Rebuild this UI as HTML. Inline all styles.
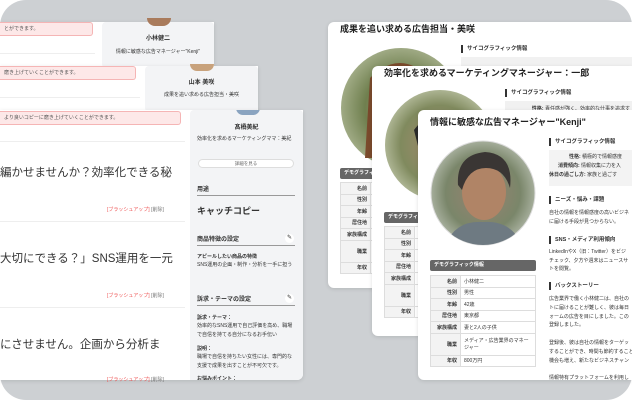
<!DOCTYPE html>
<html><head><meta charset="utf-8">
<style>
*{margin:0;padding:0;box-sizing:border-box}
body{width:632px;height:400px;overflow:hidden;background:#fff;font-family:"Liberation Sans","Noto Sans CJK JP",sans-serif;color:#333;position:relative}
.bg{position:absolute;left:0;top:0;width:632px;height:400px;background:#cdd0d3;border-radius:26px}
.a{position:absolute}
.card{position:absolute;background:#fff;box-shadow:0 1px 4px rgba(0,0,0,.12)}
.pink{position:absolute;left:0;height:14px;background:#fde8e8;border:1px solid #f5b5b5;border-left:none;border-radius:0 3px 3px 0;font-size:5px;line-height:12px;padding-left:4px;color:#555}
.side{position:absolute;background:#f3f4f6;border-radius:4px}
.t5{font-size:5px;line-height:9px}
.b{font-weight:bold}
.big{font-size:11.5px;color:#333;white-space:nowrap}
.tags{font-size:5px;color:#e55}
.sep{position:absolute;height:1px;background:#eee}
.h{font-size:6px;font-weight:bold;border-bottom:1px solid #999;padding-bottom:2px}
.sec{font-size:5.5px;font-weight:bold;border-left:2px solid #333;padding-left:4px;line-height:8px;white-space:nowrap}
.title{font-size:9px;font-weight:bold;white-space:nowrap;color:#222}
.dh{background:#666;color:#fff;font-size:5px;font-weight:bold;height:11px;line-height:11px;padding-left:4px;border-radius:2px}
table{border-collapse:collapse;font-size:5px}
td{border:1px solid #ddd;height:11.5px;padding:0 3px}
td.l{background:#f3f3f3;text-align:right;font-weight:bold;width:30px}
.pen{position:absolute;width:9px;height:9px;border-radius:50%;background:#fff;font-size:6px;line-height:9px;text-align:center}
</style></head><body>
<div class="bg"></div>

<!-- left stack -->
<div class="card" style="left:0;top:22px;width:214px;height:200px"></div>
<div class="pink" style="top:22px;width:93px">とができます。</div>
<div class="side" style="left:102px;top:22px;width:112px;height:46px"></div>
<div class="a" style="left:147px;top:18px;width:24px;height:8px;border-radius:0 0 12px 12px;background:#a97b5c"></div>
<div class="a b" style="left:102px;top:33px;width:112px;text-align:center;font-size:6px">小林健二</div>
<div class="a t5" style="left:102px;top:48px;width:112px;text-align:center">情報に敏感な広告マネージャー"Kenji"</div>
<div class="sep" style="left:0;top:53px;width:95px"></div>

<div class="card" style="left:0;top:66px;width:258px;height:200px"></div>
<div class="pink" style="top:66px;width:136px">磨き上げていくことができます。</div>
<div class="side" style="left:145px;top:66px;width:113px;height:46px"></div>
<div class="a" style="left:190px;top:64px;width:24px;height:7px;border-radius:0 0 12px 12px;background:#c8a27c"></div>
<div class="a b" style="left:145px;top:77px;width:113px;text-align:center;font-size:6px">山本 美咲</div>
<div class="a t5" style="left:145px;top:91px;width:113px;text-align:center">成果を追い求める広告担当・美咲</div>
<div class="sep" style="left:0;top:97px;width:140px"></div>

<div class="card" style="left:0;top:110px;width:303px;height:270px;border-radius:0 0 6px 0"></div>
<div class="pink" style="top:111px;width:181px">より良いコピーに磨き上げていくことができます。</div>
<div class="sep" style="left:0;top:141px;width:185px"></div>
<div class="a big" style="left:0;top:164px;width:185px;overflow:hidden">編かせませんか？効率化できる秘</div>
<div class="a tags" style="left:107px;top:206px">[ブラッシュアップ] <span style="color:#777">[削除]</span></div>
<div class="sep" style="left:0;top:221px;width:185px"></div>
<div class="a big" style="left:0;top:250px;width:185px;overflow:hidden">大切にできる？」SNS運用を一元</div>
<div class="a tags" style="left:107px;top:292px">[ブラッシュアップ] <span style="color:#777">[削除]</span></div>
<div class="sep" style="left:0;top:307px;width:185px"></div>
<div class="a big" style="left:0;top:336px;width:185px;overflow:hidden">にさせません。企画から分析ま</div>
<div class="a tags" style="left:107px;top:376px">[ブラッシュアップ] <span style="color:#777">[削除]</span></div>

<div class="side" style="left:190px;top:110px;width:113px;height:270px;border-radius:4px 4px 6px 0;overflow:hidden">
 <div class="a" style="left:46px;top:-2px;width:24px;height:7px;border-radius:0 0 12px 12px;background:#8aa4c0"></div>
 <div class="a b" style="left:0;top:12px;width:113px;text-align:center;font-size:6px">髙橋美紀</div>
 <div class="a t5" style="left:7px;top:25px;width:100px">効率化を求めるマーケティングママ：美紀</div>
 <div class="a" style="left:8px;top:49px;width:96px;height:9px;background:#fff;border:1px solid #ddd;border-radius:5px;font-size:4.5px;line-height:7px;text-align:center;color:#666">詳細を見る</div>
 <div class="a h" style="left:7px;top:74px;width:98px">用途</div>
 <div class="a b" style="left:7px;top:94px;font-size:9px">キャッチコピー</div>
 <div class="a h" style="left:7px;top:124px;width:98px">商品特徴の設定</div>
 <div class="pen" style="left:95px;top:124px">✎</div>
 <div class="a t5 b" style="left:7px;top:143px">アピールしたい商品の特徴</div>
 <div class="a t5" style="left:7px;top:151px;width:98px;line-height:9px">SNS運用の企画・制作・分析を一手に担う</div>
 <div class="a h" style="left:7px;top:184px;width:98px">訴求・テーマの設定</div>
 <div class="pen" style="left:95px;top:184px">✎</div>
 <div class="a t5 b" style="left:7px;top:204px">訴求・テーマ：</div>
 <div class="a t5" style="left:7px;top:212px;width:98px">効率的なSNS運用で自己評価を高め、職場で自信を持てる自分になるお手伝い</div>
 <div class="a t5 b" style="left:7px;top:235px">説明：</div>
 <div class="a t5" style="left:7px;top:243px;width:98px">職場で自信を持ちたい女性には、専門的な支援で成果を出すことが不可欠です。</div>
 <div class="a t5 b" style="left:7px;top:265px">お悩みポイント：</div>
</div>

<!-- right stack A -->
<div class="card" style="left:328px;top:22px;width:304px;height:266px;border-radius:6px 0 0 6px"></div>
<div class="a title" style="left:340px;top:22px">成果を追い求める広告担当・美咲</div>
<svg class="a" style="left:340px;top:48px" width="122" height="120"><defs><radialGradient id="ga" cx=".5" cy=".5" r=".6"><stop offset="0" stop-color="#b89a7e"/><stop offset=".5" stop-color="#6f7f4e"/><stop offset="1" stop-color="#b8c0a0"/></radialGradient></defs><circle cx="61" cy="60" r="60" fill="url(#ga)"/><path d="M30 30 Q60 0 90 30 L95 110 L25 110Z" fill="#7a4a2c"/></svg>
<div class="a sec" style="left:461px;top:45px">サイコグラフィック情報</div>
<div class="a" style="left:461px;top:57px;width:171px;height:9px;background:#f1f1f1"></div>
<div class="a dh" style="left:340px;top:168px;width:96px">デモグラフィック情報</div>
<table class="a" style="left:340px;top:182px;width:96px"><tr><td class="l">名前</td><td></td></tr><tr><td class="l">性別</td><td></td></tr><tr><td class="l">年齢</td><td></td></tr><tr><td class="l">居住地</td><td></td></tr><tr><td class="l">家族構成</td><td></td></tr><tr><td class="l" style="height:22px">職業</td><td></td></tr><tr><td class="l">年収</td><td></td></tr></table>

<!-- B -->
<div class="card" style="left:372px;top:66px;width:260px;height:270px;border-radius:6px 0 0 6px"></div>
<div class="a title" style="left:384px;top:66px">効率化を求めるマーケティングマネージャー：一郎</div>
<svg class="a" style="left:384px;top:90px" width="112" height="110"><defs><radialGradient id="gb" cx=".5" cy=".5" r=".6"><stop offset="0" stop-color="#a88a70"/><stop offset=".6" stop-color="#808a5e"/><stop offset="1" stop-color="#ccd2b8"/></radialGradient></defs><circle cx="56" cy="55" r="55" fill="url(#gb)"/><path d="M30 40 Q56 5 85 40 L80 60 L35 60Z" fill="#2a2a2a"/></svg>
<div class="a sec" style="left:505px;top:89px">サイコグラフィック情報</div>
<div class="a" style="left:505px;top:101px;width:127px;height:16px;background:#f1f1f1;font-size:5px;line-height:16px;text-align:right;padding-right:2px;white-space:nowrap;overflow:hidden"><b>性格:</b> 責任感が強く、効率的な仕事を追求す</div>
<div class="a dh" style="left:384px;top:212px;width:100px">デモグラフィック情報</div>
<table class="a" style="left:384px;top:226px;width:100px"><tr><td class="l">名前</td><td></td></tr><tr><td class="l">性別</td><td></td></tr><tr><td class="l">年齢</td><td></td></tr><tr><td class="l">居住地</td><td></td></tr><tr><td class="l">家族構成</td><td></td></tr><tr><td class="l" style="height:22px">職業</td><td></td></tr><tr><td class="l">年収</td><td></td></tr></table>

<!-- C -->
<div class="card" style="left:418px;top:110px;width:214px;height:270px;border-radius:6px 0 0 6px;overflow:hidden">
 <div class="a title" style="left:12px;top:5px">情報に敏感な広告マネージャー"Kenji"</div>
 <svg class="a" style="left:12px;top:30px" width="106" height="106"><defs><radialGradient id="gc" cx=".5" cy=".5" r=".6"><stop offset="0" stop-color="#9a8270"/><stop offset=".6" stop-color="#7a866a"/><stop offset="1" stop-color="#c4cabe"/></radialGradient><clipPath id="cc"><circle cx="53" cy="53" r="52"/></clipPath></defs><circle cx="53" cy="53" r="52" fill="url(#gc)" stroke="#ddd"/><g clip-path="url(#cc)"><path d="M15 106 Q25 80 53 82 Q82 80 92 106Z" fill="#6e7a82"/><ellipse cx="54" cy="52" rx="22" ry="28" fill="#b08466"/><path d="M28 45 Q26 15 55 12 Q84 14 80 48 Q74 28 56 28 Q38 28 32 50Z" fill="#3a3634"/></g></svg>
 <div class="a dh" style="left:12px;top:150px;width:106px">デモグラフィック情報</div>
 <table class="a" style="left:12px;top:165px;width:106px"><tr><td class="l">名前</td><td>小林健二</td></tr><tr><td class="l">性別</td><td>男性</td></tr><tr><td class="l">年齢</td><td>42歳</td></tr><tr><td class="l">居住地</td><td>東京都</td></tr><tr><td class="l">家族構成</td><td>妻と2人の子供</td></tr><tr><td class="l" style="height:22px">職業</td><td>メディア・広告業界のマネージャー</td></tr><tr><td class="l">年収</td><td>800万円</td></tr></table>
 <div class="a sec" style="left:131px;top:28px">サイコグラフィック情報</div>
 <div class="a t5" style="left:131px;top:40px;width:90px;height:36px;background:#f3f3f3;padding-top:3px;white-space:nowrap"><div style="padding-left:20px"><b>性格:</b> 積極的で情報感度</div><div style="padding-left:9px"><b>消費傾向:</b> 情報収集に力を入</div><div><b>休日の過ごし方:</b> 家族と過ごす</div></div>
 <div class="a sec" style="left:131px;top:86px">ニーズ・悩み・課題</div>
 <div class="a t5" style="left:131px;top:99px;width:90px;white-space:nowrap;line-height:8.5px">自社の情報を情報感度の高いビジネ<br>に届ける手段が見つからない。</div>
 <div class="a sec" style="left:131px;top:126px">SNS・メディア利用傾向</div>
 <div class="a t5" style="left:131px;top:138px;white-space:nowrap;line-height:8.5px">LinkedInやX（旧：Twitter）をビジ<br>チェック、夕方や週末はニュースサ<br>トを閲覧。</div>
 <div class="a sec" style="left:131px;top:172px">バックストーリー</div>
 <div class="a t5" style="left:131px;top:185px;white-space:nowrap;line-height:8.8px">広告業界で働く小林健二は、自社の<br>トに届けることが難しく、彼は毎日<br>ォームの広告を目にしました。この<br>登録しました。<br><br>登録後、彼は自社の情報をターゲッ<br>することができ、時間も節約すること<br>機会も増え、新たなビジネスチャン<br><br>情報特有プラットフォームを利用し<br>に届けることができるようになった</div>
</div>
</body></html>
